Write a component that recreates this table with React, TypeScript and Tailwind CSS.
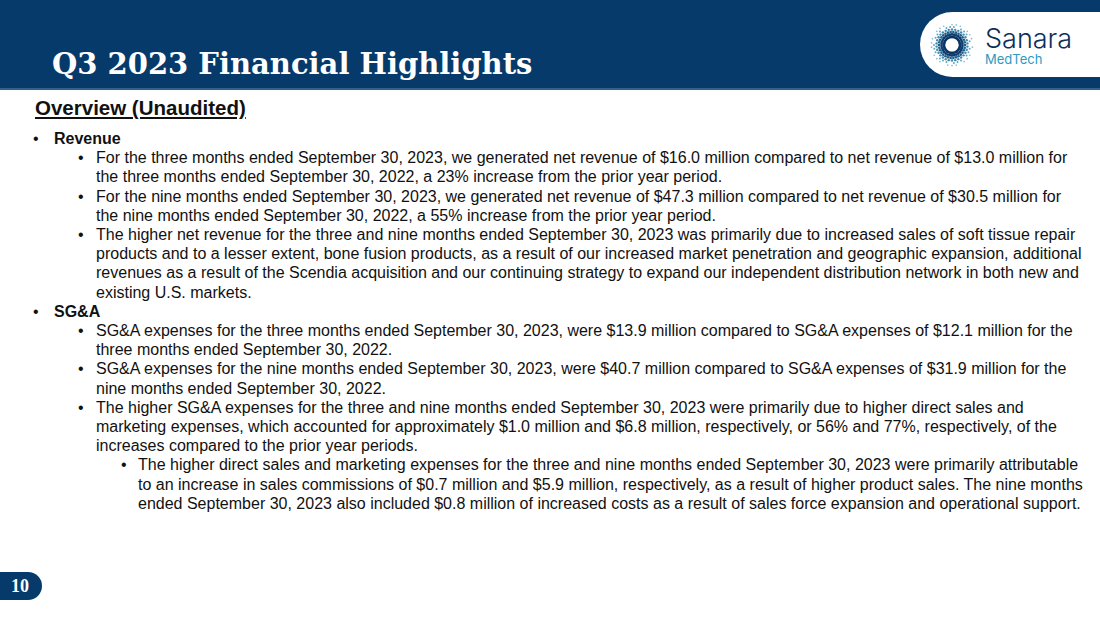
import React from "react";

type Item = { level: 1 | 2 | 3; bold?: boolean; lines: string[] };

const items: Item[] = [
  { level: 1, bold: true, lines: ["Revenue"] },
  {
    level: 2,
    lines: [
      "For the three months ended September 30, 2023, we generated net revenue of $16.0 million compared to net revenue of $13.0 million for",
      "the three months ended September 30, 2022, a 23% increase from the prior year period.",
    ],
  },
  {
    level: 2,
    lines: [
      "For the nine months ended September 30, 2023, we generated net revenue of $47.3 million compared to net revenue of $30.5 million for",
      "the nine months ended September 30, 2022, a 55% increase from the prior year period.",
    ],
  },
  {
    level: 2,
    lines: [
      "The higher net revenue for the three and nine months ended September 30, 2023 was primarily due to increased sales of soft tissue repair",
      "products and to a lesser extent, bone fusion products, as a result of our increased market penetration and geographic expansion, additional",
      "revenues as a result of the Scendia acquisition and our continuing strategy to expand our independent distribution network in both new and",
      "existing U.S. markets.",
    ],
  },
  { level: 1, bold: true, lines: ["SG&A"] },
  {
    level: 2,
    lines: [
      "SG&A expenses for the three months ended September 30, 2023, were $13.9 million compared to SG&A expenses of $12.1 million for the",
      "three months ended September 30, 2022.",
    ],
  },
  {
    level: 2,
    lines: [
      "SG&A expenses for the nine months ended September 30, 2023, were $40.7 million compared to SG&A expenses of $31.9 million for the",
      "nine months ended September 30, 2022.",
    ],
  },
  {
    level: 2,
    lines: [
      "The higher SG&A expenses for the three and nine months ended September 30, 2023 were primarily due to higher direct sales and",
      "marketing expenses, which accounted for approximately $1.0 million and $6.8 million, respectively, or 56% and 77%, respectively, of the",
      "increases compared to the prior year periods.",
    ],
  },
  {
    level: 3,
    lines: [
      "The higher direct sales and marketing expenses for the three and nine months ended September 30, 2023 were primarily attributable",
      "to an increase in sales commissions of $0.7 million and $5.9 million, respectively, as a result of higher product sales. The nine months",
      "ended September 30, 2023 also included $0.8 million of increased costs as a result of sales force expansion and operational support.",
    ],
  },
];

// dotted sunburst mark of the logo
function SunMark() {
  const dots: React.ReactElement[] = [];
  const rings = [
    { r: 8, s: 1.4, c: "#0b3566" },
    { r: 10.5, s: 1.4, c: "#0d3d6e" },
    { r: 13, s: 1.3, c: "#1f5c88" },
    { r: 15.5, s: 1.2, c: "#3f88ae" },
    { r: 18, s: 1.0, c: "#5ea8c8" },
    { r: 20.5, s: 0.85, c: "#86c2da" },
  ];
  const n = 30;
  rings.forEach((ring, ri) => {
    for (let i = 0; i < n; i++) {
      const a = ((i + (ri % 2) * 0.5) / n) * Math.PI * 2;
      if (ri >= 4 && (i * 7 + ri) % 4 === 0) continue;
      dots.push(
        <circle
          key={`${ri}-${i}`}
          cx={24 + Math.cos(a) * ring.r}
          cy={24 + Math.sin(a) * ring.r}
          r={ring.s}
          fill={ring.c}
        />
      );
    }
  });
  return (
    <svg width="48" height="48" viewBox="0 0 48 48">
      {dots}
    </svg>
  );
}

export default function App() {
  const indent = { 1: "pl-[33px]", 2: "pl-[78px]", 3: "pl-[121px]" } as const;
  const gap = { 1: "w-[21px]", 2: "w-[18px]", 3: "w-[17px]" } as const;

  return (
    <div className="w-[1100px] h-[619px] bg-white relative overflow-hidden font-['Liberation_Sans',Arial,sans-serif] text-[#111]">
      {/* Header */}
      <div className="h-[88px] bg-[#063a6b] flex items-end relative">
        <h1 className="pl-[52px] pb-[9px] text-white font-bold text-[29px] leading-none font-['DejaVu_Serif',Georgia,serif]">
          Q3 2023 Financial Highlights
        </h1>
        <div className="absolute left-[920px] top-[12px] h-[65px] w-[200px] bg-white rounded-l-[33px] flex items-center pl-[8px]">
          <SunMark />
          <div className="ml-[9px] flex flex-col pt-[1px]">
            <span className="text-[#0c2f5b] text-[27px] leading-[27px] font-['Inter',sans-serif] font-light">Sanara</span>
            <span className="text-[#2b9bbf] text-[13px] leading-[14px] font-['Inter',sans-serif]">MedTech</span>
          </div>
        </div>
      </div>
      <div className="h-[2px] bg-[#34608c]" />

      {/* Body */}
      <div className="pl-[35px] pt-[7px]">
        <h2 className="font-bold text-[20.5px] underline underline-offset-[2px] decoration-[1.5px] leading-[22px]">
          Overview (Unaudited)
        </h2>
      </div>
      <ul className="mt-[10px] text-[16px] leading-[19.2px]">
        {items.map((it, i) => (
          <li key={i} className={`flex ${indent[it.level]}`}>
            <span className={`${gap[it.level]} shrink-0`}>•</span>
            <div className={it.bold ? "font-bold" : ""}>
              {it.lines.map((l, j) => (
                <div key={j} className="whitespace-nowrap">
                  {l}
                </div>
              ))}
            </div>
          </li>
        ))}
      </ul>

      {/* Page number */}
      <div className="absolute left-0 top-[572px] h-[28px] w-[42px] bg-[#063a6b] rounded-r-[14px] flex items-center justify-center">
        <span className="text-white font-bold text-[18px] font-['Liberation_Serif',serif] pr-[2px]">10</span>
      </div>
    </div>
  );
}
